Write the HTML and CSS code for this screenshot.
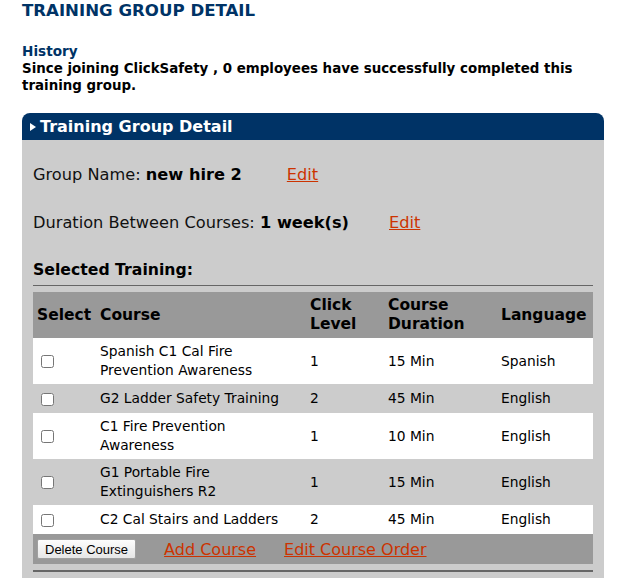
FILE: index.html
```html
<!DOCTYPE html>
<html lang="en">
<head>
  <meta charset="UTF-8">
  <title>Training Group Detail</title>
  <link rel="stylesheet" href="styles.css">
</head>
<body>
  <div class="page">
    <h1 class="page-title">TRAINING GROUP DETAIL</h1>

    <div class="history">
      <h3>History</h3>
      <p>Since joining ClickSafety , 0 employees have successfully completed this training group.</p>
    </div>

    <div class="panel">
      <div class="panel-header">
        <span class="arrow"></span>
        <span>Training Group Detail</span>
      </div>
      <div class="panel-body">
        <div class="field-row">
          <span class="label">Group Name: <b>new hire 2</b></span>
          <a href="#" class="edit-link edit-name">Edit</a>
        </div>
        <div class="field-row second">
          <span class="label">Duration Between Courses: <b>1 week(s)</b></span>
          <a href="#" class="edit-link edit-duration">Edit</a>
        </div>

        <h4 class="section-title">Selected Training:</h4>

        <table class="courses">
          <colgroup>
            <col class="col-select">
            <col class="col-course">
            <col class="col-level">
            <col class="col-duration">
            <col class="col-lang">
          </colgroup>
          <thead>
            <tr>
              <th>Select</th>
              <th>Course</th>
              <th>Click<br>Level</th>
              <th>Course<br>Duration</th>
              <th>Language</th>
            </tr>
          </thead>
          <tbody>
            <tr>
              <td class="check"><input type="checkbox"></td>
              <td>Spanish C1 Cal Fire<br>Prevention Awareness</td>
              <td>1</td>
              <td>15 Min</td>
              <td>Spanish</td>
            </tr>
            <tr class="alt">
              <td class="check"><input type="checkbox"></td>
              <td>G2 Ladder Safety Training</td>
              <td>2</td>
              <td>45 Min</td>
              <td>English</td>
            </tr>
            <tr>
              <td class="check"><input type="checkbox"></td>
              <td>C1 Fire Prevention<br>Awareness</td>
              <td>1</td>
              <td>10 Min</td>
              <td>English</td>
            </tr>
            <tr class="alt">
              <td class="check"><input type="checkbox"></td>
              <td>G1 Portable Fire<br>Extinguishers R2</td>
              <td>1</td>
              <td>15 Min</td>
              <td>English</td>
            </tr>
            <tr>
              <td class="check"><input type="checkbox"></td>
              <td>C2 Cal Stairs and Ladders</td>
              <td>2</td>
              <td>45 Min</td>
              <td>English</td>
            </tr>
          </tbody>
          <tfoot>
            <tr>
              <td colspan="5">
                <div class="actions">
                  <button class="delete-btn">Delete Course</button>
                  <a href="#" class="action-link">Add Course</a>
                  <a href="#" class="action-link">Edit Course Order</a>
                </div>
              </td>
            </tr>
          </tfoot>
        </table>
        <div class="divider"></div>
      </div>
    </div>
  </div>
</body>
</html>
```

FILE: styles.css
```css
body {
  margin: 0;
  font-family: 'DejaVu Sans', Verdana, sans-serif;
  color: #000000;
  background: #ffffff;
}

.page {
  padding: 2px 0 0 22px;
  width: 582px;
}

.page-title {
  margin: 0;
  font-size: 16.6px;
  line-height: 18px;
  color: #003366;
  font-weight: bold;
}

.history {
  margin-top: 23px;
}

.history h3 {
  margin: 0;
  font-size: 13.6px;
  line-height: 17px;
  color: #003366;
}

.history p {
  margin: 0;
  font-size: 13.4px;
  line-height: 17px;
  font-weight: bold;
}

.panel {
  margin-top: 19px;
}

.panel-header {
  height: 27px;
  background: #003366;
  border-radius: 8px 8px 0 0;
  color: #ffffff;
  font-weight: bold;
  font-size: 16px;
  display: flex;
  align-items: center;
  gap: 4px;
  padding-left: 8px;
}

.arrow {
  width: 0;
  height: 0;
  border-top: 4px solid transparent;
  border-bottom: 4px solid transparent;
  border-left: 6px solid #ffffff;
}

.panel-body {
  background: #cccccc;
  padding: 25px 11px 8px 11px;
}

.field-row {
  display: flex;
  align-items: center;
  font-size: 16.2px;
  line-height: 20px;
  color: #111111;
}

.field-row.second {
  margin-top: 28px;
}

.field-row b {
  color: #000000;
}

.edit-link {
  color: #cc3300;
  text-decoration: underline;
}

.edit-name {
  margin-left: 45px;
}

.edit-duration {
  margin-left: 40px;
}

.section-title {
  margin: 27px 0 0 0;
  font-size: 15.7px;
  line-height: 20px;
  padding-bottom: 5px;
  border-bottom: 1px solid #666666;
}

.courses {
  margin-top: 6px;
  width: 560px;
  table-layout: fixed;
  border-collapse: collapse;
  font-size: 13.8px;
  line-height: 19px;
}

.col-select {
  width: 63px;
}

.col-course {
  width: 210px;
}

.col-level {
  width: 78px;
}

.col-duration {
  width: 113px;
}

.col-lang {
  width: 96px;
}

.courses th {
  background: #999999;
  text-align: left;
  font-size: 15.5px;
  line-height: 19px;
  height: 46px;
  padding: 0 4px;
  box-sizing: border-box;
  white-space: nowrap;
}

.courses td {
  padding: 4px 4px;
  height: 21px;
  vertical-align: middle;
  white-space: nowrap;
}

.courses tbody tr {
  background: #ffffff;
}

.courses tbody tr.alt {
  background: #cccccc;
}

.courses td.check {
  padding-left: 8px;
}

.courses input[type="checkbox"] {
  margin: 0;
  width: 13px;
  height: 13px;
  vertical-align: middle;
}

.courses tfoot td {
  background: #999999;
  height: 30px;
  padding: 0 4px;
  box-sizing: border-box;
}

.actions {
  display: flex;
  align-items: center;
}

.delete-btn {
  font-family: 'Liberation Sans', Arial, sans-serif;
  font-size: 13px;
  height: 20px;
  padding: 0 7px;
  background: linear-gradient(#fdfdfd, #e6e6e6);
  border: 1px solid #a0a0a0;
  border-radius: 2px;
  color: #000000;
}

.action-link {
  font-size: 16px;
  color: #cc3300;
  text-decoration: underline;
  margin-left: 28px;
}

.divider {
  margin-top: 6px;
  border-top: 2px solid #666666;
}
```
